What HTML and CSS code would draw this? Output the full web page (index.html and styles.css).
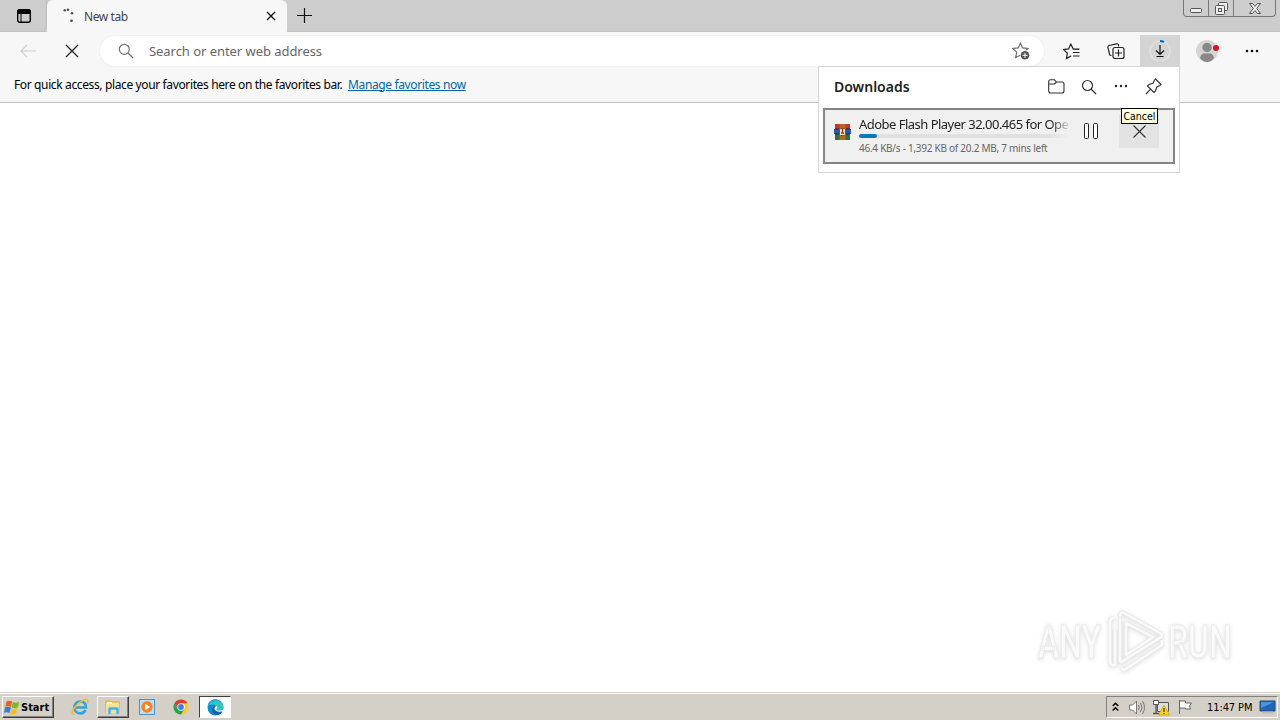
FILE: index.html
```html
<!DOCTYPE html>
<html lang="en">
<head>
    <meta charset="UTF-8">
    <title>New tab</title>
    <link rel="stylesheet" href="styles.css">
</head>
<body>
    <div class="tab-strip">
        <div class="tab-actions">
            <svg width="14" height="14" viewBox="0 0 14 14"><rect x=".7" y=".7" width="12.6" height="12.6" rx="2" fill="none" stroke="#000" stroke-width="1.4"/><path d="M1 1h12v3.5H1zM4 4v9" stroke="#000" fill="#000"/></svg>
        </div>
        <div class="tab">
            <svg class="spinner" width="12" height="16" viewBox="0 0 12 16" fill="#555"><circle cx="1.8" cy="2.3" r="1.3"/><circle cx="5" cy="1.8" r="1.3"/><circle cx="9" cy="5.3" r="1.3"/><circle cx="8.5" cy="12.8" r="1.4"/></svg>
            <span class="tab-title">New tab</span>
            <svg width="10" height="10" viewBox="0 0 10 10"><path d="M1 1l8 8M9 1l-8 8" stroke="#111" stroke-width="1.4"/></svg>
        </div>
        <svg class="new-tab" width="15" height="15" viewBox="0 0 15 15"><path d="M7.5 0v15M0 7.5h15" stroke="#111" stroke-width="1.2"/></svg>
        <div class="window-controls">
            <span class="control minimize"><svg width="12" height="5" viewBox="0 0 12 5"><rect x=".5" y=".5" width="11" height="4" rx="1" fill="#eee" stroke="#555"/></svg></span>
            <span class="control restore"><svg width="13" height="13" viewBox="0 0 13 13" fill="#eee" stroke="#555"><rect x="3.5" y=".5" width="9" height="8" rx="1"/><rect x=".5" y="3.5" width="9" height="9" rx="1"/><rect x="3.5" y="6.5" width="3" height="3"/></svg></span>
            <span class="control close"><svg width="12" height="11" viewBox="0 0 12 11"><path d="M.5.5h3L6 3.400 8.500.5h3L7.700 5.500l3.800 5h-3L6 7.600l-2.500 2.900h-3l3.800-5z" fill="#eee" stroke="#555"/></svg></span>
        </div>
    </div>

    <div class="toolbar">
        <svg class="back" width="16" height="14" viewBox="0 0 16 14"><path d="M7 .8L1 7l6 6.200M1 7h15" fill="none" stroke="#ccc" stroke-width="1.200"/></svg>
        <svg class="stop" width="14" height="14" viewBox="0 0 14 14"><path d="M1 1l12 12M13 1L1 13" stroke="#222" stroke-width="1.200"/></svg>
        <div class="address-bar">
            <svg width="16" height="16" viewBox="0 0 16 16" fill="none" stroke="#707070" stroke-width="1.200"><circle cx="6.300" cy="6.300" r="5"/><path d="M10 10l5 5"/></svg>
            <span class="address-text">Search or enter web address</span>
            <svg width="18" height="18" viewBox="0 0 18 18"><path d="M8.500 1.200l2.100 4.700 5.500.6-4 3.700 1 5.300-4.600-2.400-4.800 2.500 1-5.400-4-3.700 5.500-.6z" fill="none" stroke="#666" stroke-width="1.100"/><circle cx="13" cy="13.300" r="5" fill="#fff"/><circle cx="13" cy="13.300" r="4.300" fill="#555"/><path d="M10.500 13.300h5M13 10.800v5" stroke="#fff"/></svg>
        </div>
        <div class="toolbar-button">
            <svg width="18" height="17" viewBox="0 0 18 17" fill="none" stroke="#222" stroke-width="1.200"><path d="M16 6.500l-5.700-.4-2.500-5-2.200 4.800-5 .7 3.800 3.600-1 5.300 4.700-2.600M10.500 6h6M10 9.500h6.500M10 13h6.500"/></svg>
        </div>
        <div class="toolbar-button">
            <svg width="18" height="17" viewBox="0 0 18 17" fill="none" stroke="#222" stroke-width="1.200"><path d="M4.500 12.500L2.800 12 .9 4.300Q.7 2.800 2 2.500L9.500.8q1.500-.3 1.900 1l.4 1.500"/><rect x="6" y="4.500" width="11" height="11" rx="2"/><path d="M11.500 6.500v7M8 10h7"/></svg>
        </div>
        <div class="toolbar-button active">
            <svg width="24" height="24" viewBox="0 0 24 24"><circle cx="12" cy="12" r="10" fill="none" stroke="#dedede" stroke-width="2"/><path d="M12 2q2.400 0 4 1" fill="none" stroke="#0067b8" stroke-width="2"/><path d="M12 6v9M8 11.500l4 4 4-4M8.500 17.500h7" fill="none" stroke="#111" stroke-width="1.200"/></svg>
        </div>
        <div class="toolbar-button profile">
            <svg width="24" height="24" viewBox="0 0 24 24"><circle cx="11" cy="12" r="11" fill="#d5d5d3"/><circle cx="11" cy="8.500" r="4.700" fill="#8a8886"/><path d="M4 19q1-4.500 4-4.500h6q3 0 4 4.500-3 4-7 4t-7-4z" fill="#8a8886"/><circle cx="20" cy="9" r="3" fill="#d9111d"/></svg>
        </div>
        <div class="toolbar-button menu">
            <svg width="14" height="4" viewBox="0 0 14 4"><circle cx="2" cy="2" r="1.300"/><circle cx="7" cy="2" r="1.300"/><circle cx="12" cy="2" r="1.300"/></svg>
        </div>
    </div>

    <div class="favorites-bar">
        <span class="favorites-hint">For quick access, place your favorites here on the favorites bar.</span>
        <a class="favorites-link">Manage favorites now</a>
    </div>

    <div class="page">
        <!-- Watermark -->
        <div class="watermark">
            <span class="any">ANY</span>
            <svg width="58" height="64" viewBox="0 0 58 64" fill="none" stroke-linejoin="round"><path d="M8 8Q4 8 4 12v40q0 4 5 3V20M14 8v43q0 2 3 0l38-24q2-2-1-4L18 3q-4-2-4 4M20 13v32l27-18zM15 58l3 2 38-25v-5" stroke="#e8e8e8" stroke-width="4"/><path d="M8 8Q4 8 4 12v40q0 4 5 3V20M14 8v43q0 2 3 0l38-24q2-2-1-4L18 3q-4-2-4 4M20 13v32l27-18zM15 58l3 2 38-25v-5" stroke="#fafafa" stroke-width="2.500"/></svg>
            <span class="run">RUN</span>
        </div>
    </div>

    <div class="downloads">
        <div class="downloads-header">
            <h1>Downloads</h1>
            <svg width="17" height="15" viewBox="0 0 17 15" fill="none" stroke="#333" stroke-width="1.100"><path d="M2.500.8h4L8.500 3h5.500q2 0 2 2v7q0 2-2 2H2.700q-2 0-2-2V2.700Q.7.8 2.500.8zM1 5h5.500l2-2"/></svg>
            <svg width="16" height="16" viewBox="0 0 16 16" fill="none" stroke="#333" stroke-width="1.200"><circle cx="6.500" cy="6.500" r="5"/><path d="M10 10l5 5"/></svg>
            <svg width="16" height="16" viewBox="0 0 16 16" fill="#222"><circle cx="3" cy="7" r="1.200"/><circle cx="8" cy="7" r="1.200"/><circle cx="13" cy="7" r="1.200"/></svg>
            <svg width="17" height="17" viewBox="0 0 17 17" fill="none" stroke="#333" stroke-width="1.200"><path d="M10.500 1l5.500 5.500-1.500 1.200-2.700 1.300-1.300 4L9 14.500 2.500 8 4 6.500l4-1.300 1.300-2.700zM5.500 11.300L1 16"/></svg>
        </div>
        <div class="download-item">
            <svg class="archive" width="17" height="16" viewBox="0 0 17 16"><path fill="#c4372f" d="M1 0h15v5H1z"/><path fill="#3454a8" d="M0 5h17v5H0z"/><path fill="#267346" d="M1 10h15v6H1z"/><path d="M1 5h15M1 10h15" stroke="#2a2040"/><path fill="#b5652a" d="M5.500 0h6v16h-6z"/><rect x="5.500" y="4.500" width="6" height="7" rx="1" fill="#efe3c3" stroke="#8a4a20"/><path d="M8.500 5v4M7 9h3" stroke="#a23428" stroke-width="1.300"/></svg>
            <div class="download-info">
                <div class="file-name">Adobe Flash Player 32.00.465 for Ope</div>
                <div class="progress"><div class="progress-value" style="width: 18px"></div></div>
                <div class="file-status">46.4 KB/s - 1,392 KB of 20.2 MB, 7 mins left</div>
            </div>
            <svg class="pause" width="14" height="16" viewBox="0 0 14 16" fill="#fff" stroke="#222"><rect x=".5" y=".5" width="4" height="15" rx="1"/><rect x="9.500" y=".5" width="4" height="15" rx="1"/></svg>
            <div class="cancel"><svg width="13" height="13" viewBox="0 0 13 13"><path d="M.5.5l12 12M12.500.5l-12 12" stroke="#333" stroke-width="1.100"/></svg></div>
        </div>
        <div class="tooltip">Cancel</div>
    </div>

    <div class="taskbar">
        <div class="start">
            <svg width="16" height="15" viewBox="0 0 16 15"><path d="M2.500 1.500q3-1.500 5.700 0L7 7Q4 5.500 1.300 7z" fill="#e8632c"/><path d="M8.800 2q3 1.500 6.500 0L13.800 7.500q-3 1.300-6.200 0z" fill="#7db72f"/><path d="M1 7.600q3-1.500 5.900 0L5.500 13q-3-1.500-5.500 0z" fill="#2f83cd"/><path d="M7.500 8.200q3 1.500 6.100 0L12 14q-3 1.300-6 0z" fill="#f7bd25"/></svg>
            <span>Start</span>
        </div>
        <div class="task ie">
            <svg width="18" height="18" viewBox="0 0 18 18" fill="none"><path d="M14.500 12q-1.300 3.300-5.200 3.300c-8 0-8-11.800 0-11.800q5.700 0 5.700 6H5" stroke="#35a3df" stroke-width="2.700"/><path d="M3.500 16C-1 17 1 10.500 8 5S18 .5 16.500 5.500" stroke="#edbd36" stroke-width="1.500"/></svg>
        </div>
        <div class="task raised">
            <svg width="18" height="16" viewBox="0 0 18 16"><path d="M1 2Q1 1 2 1h4l1 1h8q1 0 1 1v11H1z" fill="#dfbd5b"/><path d="M2 4h13v10H2z" fill="#f6e293"/><path d="M3 3h5v2H3z" fill="#fff6cc"/><path d="M4 15.500V10q0-2 2-2h7q2 0 2 2v5.500h-3V11H7v4.500z" fill="#54a9dc" stroke="#b9e2f5" stroke-width=".6"/></svg>
        </div>
        <div class="task player">
            <svg width="16" height="16" viewBox="0 0 16 16"><rect x=".5" y=".5" width="15" height="15" fill="#b9ddf4" stroke="#4b94ca"/><circle cx="8" cy="8" r="5.700" fill="#f28421"/><path d="M6 4.800v6.400L11.300 8z" fill="#fff"/></svg>
        </div>
        <div class="task chrome">
            <svg width="16" height="16" viewBox="0 0 16 16"><circle cx="8" cy="8" r="7.500" fill="#f9c934"/><path d="M1.500 4.250A7.500 7.500 0 0 1 14.500 4.250H8L4.750 9.900z" fill="#e33b2e"/><path d="M1.500 4.250A7.500 7.500 0 0 0 8 15.500l3.250-5.600H4.750z" fill="#25a252"/><circle cx="8" cy="8" r="3.700" fill="#fff"/><circle cx="8" cy="8" r="2.900" fill="#3f7de8"/></svg>
        </div>
        <div class="task pressed">
            <svg width="17" height="17" viewBox="0 0 17 17"><circle cx="8.500" cy="8.500" r="8" fill="#1688d0"/><path d="M.7 7C2-2 16-1 16.500 8q0 3.500-4.500 3.500-3 0-2.500-1.500Q10 6 6 5.500 2.500 5 .7 7z" fill="#36c5bd"/><path d="M.7 7C2-.5 10-1.500 14 3 9 1 3 3 .7 7z" fill="#2aa5d8"/><path d="M6 8q-2 6 3 8 4 0 6-3-3 1-6-1-2-2-1-5z" fill="#135fa8"/><path d="M9.500 7q-3 1.500-1.500 4 2.500 3 9 1V10q-2 1.800-5 1.500-3 0-2.500-1.500Q11 8 9.500 7z" fill="#fff"/></svg>
        </div>
        <div class="tray">
            <svg width="7" height="10" viewBox="0 0 7 10" fill="none" stroke="#000" stroke-width="1.500"><path d="M.7 4l2.800-2.800L6.300 4M.7 8.500l2.800-2.800 2.800 2.800"/></svg>
            <svg class="volume" width="17" height="15" viewBox="0 0 17 15" fill="none" stroke="#777"><path d="M.5 5h3L7.500 1v13l-4-4h-3z" fill="#fff"/><path d="M9.500 5q1.500 2.500 0 5M11.500 3q3 4.500 0 9M13.500 1q4 6.500 0 13"/></svg>
            <svg class="network" width="17" height="17" viewBox="0 0 17 17"><path d="M4.500 3.500h11v9h-11z" fill="#ddd" stroke="#555"/><path d="M.5 1.500h5v4h-5z" fill="#fff" stroke="#555"/><path d="M3 5.500V14M0 14.500h6" fill="none" stroke="#555" stroke-width="1.300"/><path d="M11 6l5.500 10h-11z" fill="#ffd52c" stroke="#c89700" stroke-width=".7"/><path d="M11 9v4M11 14v1" stroke="#111"/></svg>
            <svg class="flag" width="16" height="16" viewBox="0 0 16 16"><path d="M2.500 1v14M2.500 2h6v2h6l-2 3 1 3h-5V9h-6" fill="#fff" stroke="#666"/></svg>
            <span class="clock">11:47 PM</span>
            <svg width="17" height="14" viewBox="0 0 17 14"><path d="M1 1h15v10H1z" fill="#2165b5" stroke="#174c89"/><path d="M2 2h13L2 8z" fill="#4c92d5"/><path d="M3 12.500h11" stroke="#bbb" stroke-width="2"/></svg>
        </div>
    </div>
</body>
</html>
```
FILE: styles.css
```css
* {
    box-sizing: border-box;
}

body, html {
    margin: 0;
    padding: 0;
    height: 100%;
    overflow: hidden;
}

body {
    display: flex;
    flex-direction: column;
    position: relative;
    background-color: #fff;
    font-family: "Noto Sans", "Open Sans", sans-serif;
    color: #222;
    white-space: nowrap;
}

svg {
    display: block;
    flex-shrink: 0;
}

.tab-strip {
    display: flex;
    height: 32px;
    background-color: #cdcdcd;
    border-bottom: 1px solid #c3c3c3;
}

.tab-actions {
    width: 47px;
    padding: 9px 0 0 17px;
    border-right: 1px solid #bbb;
    border-radius: 0 0 6px 0;
}

.tab {
    display: flex;
    align-items: center;
    width: 240px;
    height: 32px;
    padding: 0 11px 0 16px;
    background-color: #f7f7f7;
    border-radius: 6px 6px 0 0;
}

.tab-title {
    flex: 1;
    margin-left: 9px;
    font-size: 12px;
    letter-spacing: -0.4px;
    color: #444;
}

.new-tab {
    margin: 8px 0 0 10px;
}

.window-controls {
    display: flex;
    width: 93px;
    height: 17px;
    margin: 0 4px 0 auto;
    border: 1px solid #777;
    border-top: 0;
    border-radius: 0 0 4px 4px;
}

.control {
    display: flex;
    justify-content: center;
    width: 25px;
    border-right: 1px solid #777;
}

.minimize {
    padding-top: 8px;
}

.restore {
    padding-top: 2px;
}

.control.close {
    flex: 1;
    padding-top: 3px;
    border-right: 0;
}

.toolbar {
    display: flex;
    align-items: center;
    height: 36px;
    padding: 2px 4px 0 20px;
    background-color: #f7f7f7;
}

.stop {
    margin-left: 29px;
}

.address-bar {
    display: flex;
    align-items: center;
    flex: 1;
    height: 30px;
    margin: 0 8px 0 21px;
    padding: 0 14px 0 18px;
    border-radius: 15px;
    background-color: #fff;
    box-shadow: 0 0 2px #e5e5e5;
}

.address-text {
    flex: 1;
    margin-left: 15px;
    font-size: 13px;
    letter-spacing: -0.05px;
    color: #666;
}

.toolbar-button {
    display: flex;
    align-items: center;
    justify-content: center;
    width: 40px;
    height: 32px;
    margin-right: 4px;
}

.toolbar-button.active {
    background-color: #d4d4d4;
}

.toolbar-button.profile {
    margin-left: 4px;
}

.favorites-bar {
    display: flex;
    align-items: center;
    height: 35px;
    padding: 0 14px 2px;
    background-color: #f7f7f7;
    border-bottom: 1px solid #c0c0c0;
    font-size: 12px;
    letter-spacing: -0.37px;
    color: #000;
}

.favorites-hint {
    width: 334px;
}

.favorites-link {
    color: #0067a8;
    text-decoration: underline;
}

.page {
    display: flex;
    flex: 1;
    align-items: flex-end;
    justify-content: flex-end;
    padding: 0 48px 18px 0;
}

.watermark {
    display: flex;
    align-items: center;
    font-family: Roboto, sans-serif;
    font-size: 47px;
    font-weight: 500;
    line-height: 64px;
    color: #fafafa;
    -webkit-text-stroke: 1px #ebebeb;
    filter: drop-shadow(0 1px 2px #ddd);
}

.any, .run {
    display: block;
    width: 64px;
    transform: scaleX(0.68);
    transform-origin: 0 50%;
}

.watermark svg {
    margin: 0 4px;
}

.downloads {
    position: absolute;
    top: 66px;
    left: 818px;
    width: 362px;
    height: 107px;
    padding: 0 4px;
    background-color: #fff;
    border: 1px solid #d5d5d5;
}

.downloads-header {
    display: flex;
    align-items: center;
    gap: 16px;
    height: 41px;
    padding: 0 13px 2px 11px;
}

.downloads-header h1 {
    flex: 1;
    margin: 0;
    font-size: 14px;
    font-weight: 600;
}

.download-item {
    display: flex;
    height: 56px;
    background-color: #f0f0f0;
    border: 2px solid #858585;
}

.archive {
    margin: 14px 0 0 9px;
}

.download-info {
    width: 210px;
    margin-left: 8px;
    padding-top: 5px;
}

.file-name {
    height: 19px;
    font-size: 13px;
    line-height: 18px;
    letter-spacing: -0.52px;
    -webkit-mask-image: linear-gradient(to right, #000 192px, transparent 212px);
}

.progress {
    height: 4px;
    border-radius: 2px;
    background: linear-gradient(to right, #e0e0e0 90%, #f0f0f0);
}

.progress-value {
    height: 4px;
    border-radius: 2px;
    background-color: #0875c5;
}

.file-status {
    margin-top: 3px;
    font-size: 10px;
    line-height: 15px;
    letter-spacing: -0.26px;
    color: #666;
}

.pause {
    margin: 13px 0 0 15px;
}

.cancel {
    display: flex;
    align-items: center;
    justify-content: center;
    width: 40px;
    height: 34px;
    margin: 4px 0 0 21px;
    background-color: #e3e3e3;
}

.tooltip {
    position: absolute;
    top: 41px;
    left: 302px;
    width: 37px;
    height: 16px;
    border: 1px solid #000;
    background-color: #ffffe1;
    font-family: "DejaVu Sans Condensed", "DejaVu Sans", sans-serif;
    font-size: 10.5px;
    line-height: 14px;
    text-align: center;
    color: #000;
}

.taskbar {
    display: flex;
    height: 28px;
    padding: 3px 2px 1px;
    border-top: 1px solid #d4d0c8;
    box-shadow: inset 0 1px #fff;
    background-color: #d4d0c8;
    font-family: "DejaVu Sans Condensed", "DejaVu Sans", sans-serif;
    font-size: 11px;
    color: #000;
}

.start, .raised {
    border: 1px solid;
    border-color: #fff #404040 #404040 #fff;
    box-shadow: inset -1px -1px #808080;
}

.start {
    display: flex;
    align-items: center;
    gap: 1px;
    width: 52px;
    height: 22px;
    padding-left: 1px;
    font-weight: bold;
}

.task {
    display: flex;
    align-items: center;
    justify-content: center;
    width: 32px;
    height: 22px;
}

.ie {
    margin: 0 1px 0 10px;
}

.player {
    margin-left: 2px;
}

.chrome {
    margin: 0 2px;
}

.pressed {
    border: 1px solid;
    border-color: #404040 #fff #fff #404040;
    background-color: #fff;
}

.tray {
    display: flex;
    align-items: center;
    width: 172px;
    height: 22px;
    margin-left: auto;
    padding-left: 5px;
    border: 1px solid;
    border-color: #808080 #fff #fff #808080;
}

.volume {
    margin-left: 10px;
}

.network, .flag {
    margin-left: 7px;
}

.clock {
    width: 45px;
    margin: 0 7px 0 14px;
    letter-spacing: -0.1px;
}
```
